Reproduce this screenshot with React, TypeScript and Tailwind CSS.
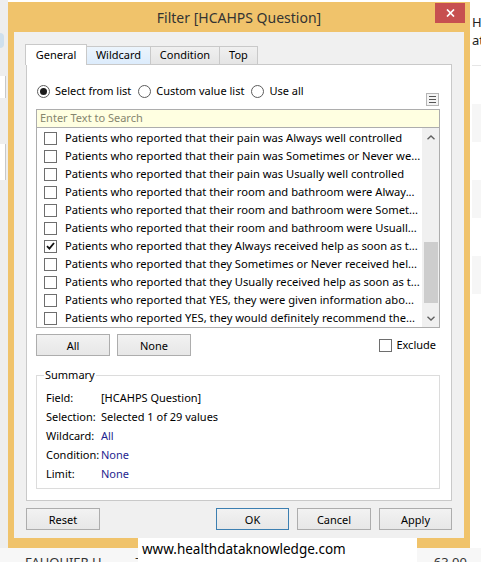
import * as React from "react"

const items = [
  { text: "Patients who reported that their pain was Always well controlled" },
  { text: "Patients who reported that their pain was Sometimes or Never we..." },
  { text: "Patients who reported that their pain was Usually well controlled" },
  { text: "Patients who reported that their room and bathroom were Alway..." },
  { text: "Patients who reported that their room and bathroom were Somet..." },
  { text: "Patients who reported that their room and bathroom were Usuall..." },
  { text: "Patients who reported that they Always received help as soon as t...", checked: true },
  { text: "Patients who reported that they Sometimes or Never received hel..." },
  { text: "Patients who reported that they Usually received help as soon as t..." },
  { text: "Patients who reported that YES, they were given information abo..." },
  { text: "Patients who reported YES, they would definitely recommend the..." },
]

const summary = [
  { label: "Field:", value: "[HCAHPS Question]" },
  { label: "Selection:", value: "Selected 1 of 29 values" },
  { label: "Wildcard:", value: "All", link: true },
  { label: "Condition:", value: "None", link: true },
  { label: "Limit:", value: "None", link: true },
]

const Checkbox = ({ checked }: { checked?: boolean }) => (
  <span className="flex h-[13px] w-[13px] shrink-0 items-center justify-center border border-[#6e6e6e] bg-white">
    {checked && (
      <svg width="9" height="8" viewBox="0 0 9 8">
        <path d="M1 4.2 L3.4 6.6 L8 1" fill="none" stroke="#111" strokeWidth="1.8" />
      </svg>
    )}
  </span>
)

const Radio = ({ label, selected }: { label: string; selected?: boolean }) => (
  <label className="flex items-center gap-[5px]">
    <span className="flex h-[13px] w-[13px] items-center justify-center rounded-full border border-[#5c5c5c] bg-white">
      {selected && <span className="h-[7px] w-[7px] rounded-full bg-[#1c1c1c]" />}
    </span>
    {label}
  </label>
)

const Button = ({ label, width, primary }: { label: string; width: string; primary?: boolean }) => (
  <button
    className={`h-[22px] ${width} border bg-gradient-to-b from-[#f2f2f2] to-[#e7e7e7] text-[11px] leading-none text-black ${
      primary ? "border-[#3c7fb1]" : "border-[#adadad]"
    }`}
  >
    {label}
  </button>
)

const Chevron = ({ down }: { down?: boolean }) => (
  <svg width="8" height="5" viewBox="0 0 8 5">
    <path
      d={down ? "M0.5 0.8 L4 4 L7.5 0.8" : "M0.5 4.2 L4 1 L7.5 4.2"}
      fill="none"
      stroke="#606060"
      strokeWidth="1.4"
    />
  </svg>
)

export default function App() {
  return (
    <div className="relative h-[562px] w-[481px] overflow-hidden bg-white font-['Noto_Sans',sans-serif] text-[11px] text-black">
      <div className="flex h-[548px]">
        {/* window behind, left */}
        <div className="flex w-[8px] flex-col gap-[6px] bg-[#eeeeee] pt-[33px]">
          <div className="h-[15px] w-[4px] rounded-r-full bg-[#cfe0ee]" />
          <div className="mt-[22px] h-[22px] w-[6px] border-r border-[#c8c8c8] bg-white" />
          <div className="mt-[40px] h-[36px] w-[6px] border-r border-[#c8c8c8] bg-white" />
        </div>

        {/* dialog */}
        <div className="mt-[2px] flex h-[546px] w-[462px] flex-col bg-[#f0c36b]">
          <div className="relative flex h-[30px] items-center justify-center">
            <span className="text-[14px] text-[#333333]">Filter [HCAHPS Question]</span>
            <div className="absolute top-[1px] right-[5px] flex h-[20px] w-[30px] items-center justify-center bg-[#c75050]">
              <svg width="9" height="8" viewBox="0 0 9 8">
                <path d="M1 0.5 L8 7.5 M8 0.5 L1 7.5" stroke="white" strokeWidth="1.7" />
              </svg>
            </div>
          </div>

          <div className="mx-[6px] mb-[10px] flex flex-1 flex-col bg-[#f0f0f0] pt-[12px]">
            {/* tabs */}
            <div className="ml-[11px] flex h-[20px] items-end">
              <div className="relative z-10 -mb-px flex h-[21px] w-[62px] items-center justify-center border border-b-0 border-[#c9c9c9] bg-white">
                General
              </div>
              <div className="flex h-[18px] w-[64px] items-center justify-center border-t border-r border-[#c9c9c9] bg-gradient-to-b from-[#ecf4fc] to-[#dcecfc]">
                Wildcard
              </div>
              <div className="flex h-[18px] w-[69px] items-center justify-center border-t border-r border-[#c9c9c9] bg-gradient-to-b from-[#f0f0f0] to-[#e5e5e5]">
                Condition
              </div>
              <div className="flex h-[18px] w-[38px] items-center justify-center border-t border-r border-[#c9c9c9] bg-gradient-to-b from-[#f0f0f0] to-[#e5e5e5]">
                Top
              </div>
            </div>

            {/* tab panel */}
            <div className="mx-[12px] flex h-[437px] flex-col border border-[#c9c9c9] bg-white pt-[19px] pr-[11px] pl-[9px]">
              <div className="flex h-[25px] justify-between">
                <div className="flex h-[15px] items-center gap-[7px] pl-[1px]">
                  <Radio label="Select from list" selected />
                  <Radio label="Custom value list" />
                  <Radio label="Use all" />
                </div>
                <div className="mr-[1px] mb-[3px] flex h-[13px] w-[13px] flex-col items-center justify-center gap-[2px] self-end border border-[#b5b5b5] bg-[#f4f4f4]">
                  <span className="h-px w-[7px] bg-[#555]" />
                  <span className="h-px w-[7px] bg-[#555]" />
                  <span className="h-px w-[7px] bg-[#555]" />
                </div>
              </div>

              <div className="flex h-[18px] items-center border border-b-0 border-[#adadad] bg-[#ffffe1] pl-[3px] text-[#86866f]">
                Enter Text to Search
              </div>
              <div className="flex h-[201px] border border-[#adadad]">
                <div className="flex flex-1 flex-col overflow-hidden pt-px text-[11.2px]">
                  {items.map((item) => (
                    <div key={item.text} className="flex h-[18px] shrink-0 items-center pl-[7px]">
                      <Checkbox checked={item.checked} />
                      <span className="ml-[8px] whitespace-nowrap">{item.text}</span>
                    </div>
                  ))}
                </div>
                <div className="flex w-[17px] flex-col bg-[#f0f0f0]">
                  <div className="flex h-[17px] items-center justify-center pt-px">
                    <Chevron />
                  </div>
                  <div className="flex-1 pt-[97px]">
                    <div className="mr-px ml-[2px] h-[61px] bg-[#cdcdcd]" />
                  </div>
                  <div className="flex h-[17px] items-center justify-center">
                    <Chevron down />
                  </div>
                </div>
              </div>

              <div className="mt-[6px] flex items-center">
                <Button label="All" width="w-[74px]" />
                <div className="ml-[7px]">
                  <Button label="None" width="w-[74px]" />
                </div>
                <label className="mr-[4px] ml-auto flex items-center gap-[4px]">
                  <Checkbox />
                  Exclude
                </label>
              </div>

              <fieldset className="mt-[12px] border border-[#dcdcdc] pt-[7px] pb-[4px] pl-[9px]">
                <legend className="-ml-[2px] px-[1px] leading-[14px]">Summary</legend>
                {summary.map((row) => (
                  <div key={row.label} className="flex h-[19px] items-center">
                    <span className="w-[55px]">{row.label}</span>
                    <span className={row.link ? "text-[#1f1f8f]" : ""}>{row.value}</span>
                  </div>
                ))}
              </fieldset>
            </div>

            {/* dialog buttons */}
            <div className="mx-[12px] mt-[7px] flex">
              <Button label="Reset" width="w-[74px]" />
              <div className="ml-auto flex gap-[8px]">
                <Button label="OK" width="w-[73px]" primary />
                <Button label="Cancel" width="w-[74px]" />
                <Button label="Apply" width="w-[73px]" />
              </div>
            </div>
          </div>
        </div>

        {/* window behind, right */}
        <div className="flex flex-1 flex-col overflow-hidden bg-white pt-[13px] pl-[2px] text-[13px] whitespace-nowrap text-[#222]">
          <span className="leading-[18px]">HC</span>
          <span className="leading-[18px]">ati</span>
          <div className="mt-[16px] h-px bg-[#e6e6e6]" />
          <div className="mt-[38px] h-[38px] bg-[#f6f6f6]" />
          <div className="mt-[38px] h-[38px] bg-[#f6f6f6]" />
          <div className="mt-[38px] h-[38px] bg-[#f6f6f6]" />
        </div>
      </div>

      {/* table row behind, bottom */}
      <div className="flex h-[14px] bg-[#f7f7f7] pt-[6px] text-[13px] leading-[16px] text-[#333]">
        <span className="ml-[25px] w-[110px]">FAUQUIER H</span>
        <span>7</span>
        <span className="ml-auto mr-[14px]">63.00</span>
      </div>

      {/* watermark */}
      <div className="absolute top-[538px] left-[138px] h-[24px] w-[279px] bg-white pt-[1px] pl-[4px] text-[13.5px] leading-[21px] text-black">
        www.healthdataknowledge.com
      </div>
    </div>
  )
}
